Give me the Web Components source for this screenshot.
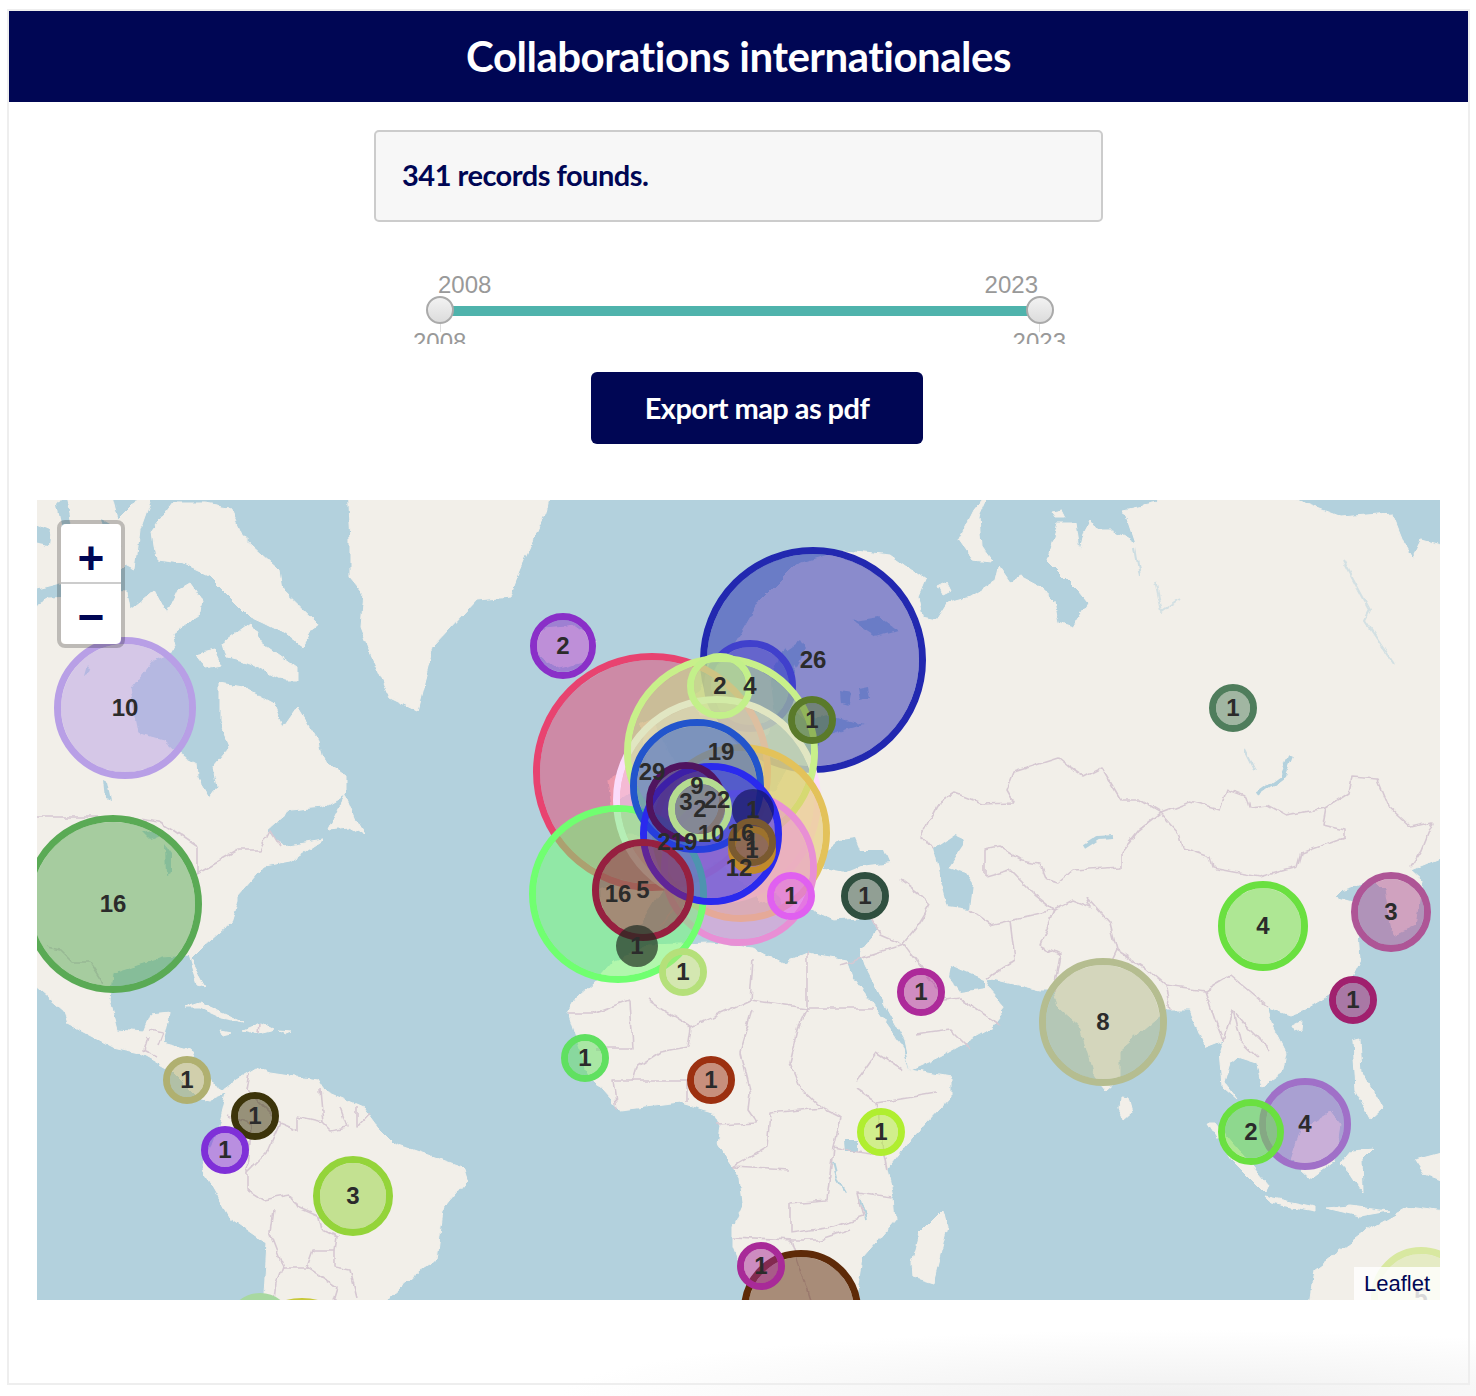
<!DOCTYPE html>
<html lang="fr"><head><meta charset="utf-8"><title>Collaborations internationales</title>
<style>
html,body{margin:0;padding:0;background:#fff}
body{font-family:"Lato","Liberation Sans",sans-serif;height:1396px;overflow:hidden;display:flow-root;background:radial-gradient(ellipse 620px 66px at 1180px 1396px,#f0f0f0,rgba(255,255,255,0))}
</style></head><body>
<x-card heading="Collaborations internationales">
  <x-info>341 records founds.</x-info>
  <x-range from="2008" to="2023"></x-range>
  <x-button>Export map as pdf</x-button>
  <x-map>
    <x-pin x="813" y="660" r="113" c="#2228b0" n="26"></x-pin>
    <x-pin x="750" y="686" r="46" c="#4040cc" n="4"></x-pin>
    <x-pin x="652" y="772" r="119" c="#e84370" n="29"></x-pin>
    <x-pin x="717" y="800" r="104" c="#fbdcfb" n="22"></x-pin>
    <x-pin x="721" y="752" r="97" c="#c8f08a" n="19"></x-pin>
    <x-pin x="741" y="833" r="89" c="#e3c25a" n="16"></x-pin>
    <x-pin x="739" y="868" r="78" c="#e88fd5" n="12"></x-pin>
    <x-pin x="618" y="894" r="89" c="#70ff70" n="16"></x-pin>
    <x-pin x="697" y="786" r="67" c="#2255cc" n="9"></x-pin>
    <x-pin x="711" y="834" r="71" c="#2a2aee" n="10"></x-pin>
    <x-pin x="686" y="802" r="40" c="#50145f" n="3"></x-pin>
    <x-pin x="700" y="809" r="32" c="#b5dc90" n="2"></x-pin>
    <x-pin x="753" y="810" r="21" c="#14145a" n="1" w="0"></x-pin>
    <x-pin x="752" y="850" r="24" c="#c08a2a" n="1"></x-pin>
    <x-pin x="752" y="842" r="24" c="#7a5a30" n="1"></x-pin>
    <x-pin x="643" y="890" r="51" c="#962040" n="5"></x-pin>
    <x-pin x="637" y="946" r="21" c="#1f2a1f" n="1" w="0"></x-pin>
    <x-pin x="720" y="686" r="33" c="#c3f08a" n="2"></x-pin>
    <x-pin x="812" y="720" r="24" c="#5a7a2a" n="1"></x-pin>
    <x-pin x="664" y="842" r="0" c="#000" n="2"></x-pin>
    <x-pin x="684" y="842" r="0" c="#000" n="19"></x-pin>
    <x-pin x="563" y="646" r="33" c="#8a2fc8" n="2"></x-pin>
    <x-pin x="125" y="708" r="71" c="#b89fe6" n="10"></x-pin>
    <x-pin x="113" y="904" r="89" c="#5aaa55" n="16"></x-pin>
    <x-pin x="1233" y="708" r="24" c="#4f7d5c" n="1"></x-pin>
    <x-pin x="791" y="896" r="24" c="#e060f0" n="1"></x-pin>
    <x-pin x="865" y="896" r="24" c="#2f4f3f" n="1"></x-pin>
    <x-pin x="683" y="972" r="24" c="#b5e07a" n="1"></x-pin>
    <x-pin x="921" y="992" r="24" c="#ad2a9a" n="1"></x-pin>
    <x-pin x="1263" y="926" r="45" c="#6ae040" n="4"></x-pin>
    <x-pin x="1391" y="912" r="40" c="#ae5596" n="3"></x-pin>
    <x-pin x="1353" y="1000" r="24" c="#a0206e" n="1"></x-pin>
    <x-pin x="1103" y="1022" r="64" c="#b5bd90" n="8"></x-pin>
    <x-pin x="1305" y="1124" r="46" c="#a070c8" n="4"></x-pin>
    <x-pin x="1251" y="1132" r="33" c="#6ae040" n="2"></x-pin>
    <x-pin x="881" y="1132" r="24" c="#b0ee30" n="1"></x-pin>
    <x-pin x="711" y="1080" r="24" c="#9c3010" n="1"></x-pin>
    <x-pin x="585" y="1058" r="24" c="#60e060" n="1"></x-pin>
    <x-pin x="187" y="1080" r="24" c="#b0b070" n="1"></x-pin>
    <x-pin x="255" y="1116" r="24" c="#3c340a" n="1"></x-pin>
    <x-pin x="225" y="1150" r="24" c="#7f30d8" n="1"></x-pin>
    <x-pin x="353" y="1196" r="40" c="#94d43a" n="3"></x-pin>
    <x-pin x="801" y="1310" r="60" c="#5e2a08" n="7"></x-pin>
    <x-pin x="761" y="1266" r="24" c="#a82a98" n="1"></x-pin>
    <x-pin x="260" y="1326" r="33" c="#a8d8a0" n="2"></x-pin>
    <x-pin x="302" y="1358" r="60" c="#c8c83a" n="7"></x-pin>
    <x-pin x="1421" y="1297" r="50" c="#d8e8a0" n="5"></x-pin>
  </x-map>
</x-card>

<template id="t-card"><style>
:host{display:flex;flex-direction:column;box-sizing:border-box;margin:9px 6px 0 7px;height:1376px;border:2px solid #eee;color:#000654}
header{height:91px;flex:none;background:#000654;color:#fff;font:700 42px/90px "Lato",sans-serif;text-align:center;letter-spacing:-.5px}
main{display:flex;flex-direction:column;align-items:flex-start;padding:28px 28px 0}
</style><header id="h"></header><main><slot></slot></main></template>

<template id="t-info"><style>
:host{display:flex;align-items:center;box-sizing:border-box;width:729px;height:92px;margin-left:337px;padding:0 26px 4px;background:#f7f7f7;border:2px solid #ccc;border-radius:5px;
font:700 29px "Lato",sans-serif;color:#000654;letter-spacing:-.5px}
</style><slot></slot></template>

<template id="t-range"><style>
:host{display:block;box-sizing:border-box;width:652px;height:72px;margin:50px 0 0 377px;overflow:hidden;font:24px/26px "Liberation Sans",sans-serif;color:#999}
.top{display:flex;justify-content:space-between;height:24px;padding:0 28px 0 24px}
.line{display:flex;align-items:center;height:28px;margin:0 12px}
.h{flex:none;box-sizing:border-box;width:28px;height:28px;border-radius:50%;border:2px solid #aaa;background:linear-gradient(#f2f2f2,#dcdcdc);position:relative}
.bar{flex:1;height:10px;margin:2px -14px 0;background:#4fb3ac}
.ticks{display:flex;justify-content:space-between;height:8px;margin:0 26px}
.ticks i{width:1px;background:#ddd}
.labs{display:flex;justify-content:space-between;margin:-3px 0 0 -1px}
</style>
<div class="top"><span id="a"></span><span id="b"></span></div>
<div class="line"><div class="h"></div><div class="bar"></div><div class="h"></div></div>
<div class="ticks"><i></i><i></i></div>
<div class="labs"><span id="c"></span><span id="d"></span></div></template>

<template id="t-button"><style>
:host{display:flex;align-items:center;justify-content:center;box-sizing:border-box;width:332px;height:72px;margin:28px 0 56px 554px;padding-bottom:2px;background:#000654;color:#fff;border-radius:6px;
font:700 29px "Lato",sans-serif;letter-spacing:-.55px}
</style><slot></slot></template>

<template id="t-zoom"><style>
:host{position:absolute;left:20px;top:20px;z-index:2000;display:block;box-sizing:border-box;width:68px;height:128px;border:4px solid rgba(0,0,0,.22);border-radius:8px;background-clip:padding-box}
.b{display:flex;align-items:center;justify-content:center;box-sizing:border-box;height:60px;background:#fff;color:#000654;font:700 46px/1 "Liberation Sans",sans-serif}
.t{border-radius:5px 5px 0 0;border-bottom:2px solid #ccc;padding-top:9px}
.u{border-radius:0 0 5px 5px;padding-top:6px}
</style><div class="b t">+</div><div class="b u">&#8722;</div></template>

<template id="t-pin"><style>
:host{position:absolute;display:block;width:0;height:0}
.c{position:absolute;box-sizing:border-box;border-radius:50%;border-style:solid;background-clip:padding-box}
.n{position:absolute;left:0;top:0;transform:translate(-50%,-50%);z-index:1000;font:700 24px/1 "Liberation Sans",sans-serif;color:#2b2b2b;white-space:nowrap}
</style><div class="c" id="c"></div><span class="n" id="n"></span></template>

<template id="t-map"><style>
:host{display:block;position:relative;width:1403px;height:800px;overflow:hidden;isolation:isolate;background:#b3d1dd}
svg{position:absolute;inset:0}
.att{position:absolute;right:0;bottom:0;z-index:2000;height:33px;box-sizing:border-box;padding:0 10px;background:rgba(255,255,255,.82);color:#000654;font:22px/33px "Liberation Sans",sans-serif}
.land polygon{fill:#f2efe9;stroke:#f2efe9;stroke-width:1;stroke-linejoin:round}
.w polygon{fill:#b3d1dd}
.r polyline{fill:none;stroke:#b3d1dd;stroke-width:2;stroke-linejoin:round}
.bd polyline{fill:none;stroke:#d6c8d2;stroke-width:1.6;stroke-linejoin:round}
</style>
<svg width="1403" height="800" viewBox="37 500 1403 800">
<defs><filter id="rough" filterUnits="userSpaceOnUse" x="0" y="460" width="1480" height="880" color-interpolation-filters="sRGB">
<feTurbulence type="fractalNoise" baseFrequency=".07" numOctaves="3" seed="4" result="n"/>
<feDisplacementMap in="SourceGraphic" in2="n" scale="7" xChannelSelector="R" yChannelSelector="G"/>
<feGaussianBlur stdDeviation=".55"/>
</filter></defs>
<g filter="url(#rough)">
<g class="land">
<polygon points="25,612 50,598 75,597 90,590 127,592 130,610 143,600 155,590 167,613 178,590 190,583 202,600 200,613 173,633 177,650 153,660 130,690 137,733 163,740 177,753 197,763 198,777 210,797 217,787 213,767 230,747 220,723 220,683 243,687 273,703 283,727 297,707 317,740 320,757 347,777 347,793 323,807 290,810 267,830 283,847 323,840 290,862 263,867 237,897 237,900 230,923 203,947 190,960 205,987 197,985 188,955 163,957 113,973 110,1000 118,1030 143,1032 150,1015 170,1013 163,1043 190,1050 207,1080 223,1090 237,1080 257,1068 270,1073 317,1080 323,1090 363,1107 380,1130 393,1143 463,1167 467,1180 443,1210 437,1260 420,1270 390,1297 380,1312 263,1312 267,1243 230,1217 203,1170 220,1123 227,1093 210,1100 197,1097 170,1070 140,1053 113,1047 67,1023 63,1010 25,977"/>
<polygon points="25,488 110,488 118,520 133,505 145,488 155,488 140,530 135,570 125,565 115,575 100,570 80,580 60,583 25,592"/>
<polygon points="153,530 173,503 203,503 230,507 243,537 280,570 283,590 317,623 303,647 283,633 263,623 250,617 230,597 210,577 180,563 157,560"/>
<polygon points="223,643 250,623 263,643 297,667 297,680 283,680 250,663 227,657"/>
<polygon points="195,655 215,650 222,665 205,668"/>
<polygon points="328,829 345,795 355,820 364,835 350,827"/>
<polygon points="185,1008 200,1003 243,1022 222,1018 200,1008"/>
<polygon points="243,1030 260,1023 275,1030 258,1034"/>
<polygon points="220,1031 231,1033 222,1035"/>
<polygon points="279,1031 290,1032 285,1034"/>
<polygon points="347,488 550,488 545,512 520,570 510,597 477,600 433,647 417,710 390,697 370,653 360,627 363,593 350,577 350,540"/>
<polygon points="530,640 545,628 575,625 596,640 590,660 560,668 538,655"/>
<polygon points="918,597 922,617 937,620 948,603 970,597 996,580 999,567 1010,583 1021,577 1040,587 1054,600 1058,623 1073,628 1088,603 1080,593 1047,560 1058,523 1076,523 1080,550 1084,533 1091,520 1098,530 1113,530 1135,543 1124,510 1157,503 1161,488 1270,488 1304,503 1341,517 1392,513 1404,543 1413,558 1422,540 1452,548 1452,853 1411,870 1422,880 1415,925 1393,935 1385,890 1375,880 1341,890 1334,897 1356,903 1360,960 1349,983 1304,1010 1290,1015 1268,1007 1271,1023 1286,1053 1282,1073 1262,1087 1257,1063 1238,1057 1231,1063 1225,1083 1238,1100 1223,1087 1220,1050 1223,1040 1205,1047 1190,1010 1168,1010 1120,1050 1120,1077 1106,1090 1095,1077 1080,1027 1069,1017 1058,1007 1054,990 1040,990 988,978 986,987 1005,1008 988,1030 940,1057 911,1070 905,1040 887,1008 865,965 860,950 877,930 870,917 833,920 817,913 800,905 790,925 778,895 760,880 745,862 760,860 775,905 760,900 735,875 720,862 695,872 668,880 655,900 640,925 618,930 606,922 600,915 600,890 620,884 650,885 655,875 635,855 620,835 650,838 665,825 690,815 695,790 705,780 715,795 745,800 775,790 790,765 810,770 820,740 845,730 865,725 830,715 805,720 790,705 795,660 785,645 770,680 775,720 750,755 735,740 725,715 700,715 695,695 725,660 760,600 795,565 845,550 890,555 925,580"/>
<polygon points="640,795 672,795 680,775 665,745 652,720 640,725 648,760 632,775"/>
<polygon points="608,780 625,770 632,790 612,805"/>
<polygon points="959,540 974,510 992,488 979,517 981,547 992,562 973,560"/>
<polygon points="938,586 946,582 950,590 942,594"/>
<polygon points="1052,512 1062,510 1066,518 1056,518"/>
<polygon points="577,997 593,983 613,960 630,955 650,945 710,943 753,947 783,963 807,953 847,960 853,977 870,1000 903,1047 910,1070 950,1077 950,1097 913,1137 887,1170 893,1197 895,1220 863,1257 855,1312 753,1312 748,1287 733,1247 733,1227 743,1203 740,1177 717,1143 720,1127 713,1113 680,1103 620,1110 587,1073 568,1013"/>
<polygon points="943,1210 947,1227 933,1283 913,1277 912,1263 920,1233"/>
<polygon points="1121,1097 1128,1098 1132,1113 1124,1120 1120,1110"/>
<polygon points="1207,1123 1216,1123 1268,1185 1264,1193 1231,1160"/>
<polygon points="1264,1196 1315,1207 1315,1211 1270,1203"/>
<polygon points="1290,1160 1300,1130 1330,1112 1340,1125 1335,1160 1310,1178"/>
<polygon points="1341,1163 1352,1150 1374,1148 1362,1160 1363,1192 1352,1175"/>
<polygon points="1352,1042 1360,1040 1362,1071 1382,1108 1370,1119 1355,1090"/>
<polygon points="1326,1208 1350,1206 1389,1211 1360,1216"/>
<polygon points="1415,1160 1452,1150 1452,1185 1425,1175"/>
<polygon points="1292,1026 1302,1021 1301,1030 1294,1032"/>
<polygon points="1314,1270 1371,1227 1407,1207 1452,1213 1452,1312 1308,1312"/>
</g>
<g class="w">
<polygon points="57,505 65,495 72,525 62,528"/>
<polygon points="25,520 50,530 48,545 25,540"/>
<polygon points="100,520 118,530 120,560 108,555"/>
<polygon points="822,855 840,840 855,838 860,850 885,850 890,862 860,866 845,872 825,868"/>
<polygon points="933,850 955,835 966,840 948,867 966,873 973,883 970,910 948,907 940,877"/>
<polygon points="950,965 985,980 985,988 960,992 948,975"/>
<polygon points="786,650 800,640 806,650 796,668"/>
<polygon points="853,622 880,618 897,630 875,636"/>
<polygon points="858,688 868,686 870,698 860,700"/>
<polygon points="840,692 850,694 848,706 841,704"/>
<polygon points="845,1141 858,1141 858,1152 846,1152"/>
<polygon points="143,833 158,829 162,835 150,840"/>
<polygon points="165,845 172,855 172,872 166,875"/>
<polygon points="87,665 92,672 84,676"/>
<polygon points="104,780 108,782 112,800 106,798"/>
</g>
<g class="r">
<polyline points="1290,757 1282,777 1257,795" style="stroke-width:4"/>
<polyline points="1084,847 1098,838 1113,837" style="stroke-width:4"/>
<polyline points="833,1160 838,1180 845,1192"/>
<polyline points="860,1198 866,1220"/>
<polyline points="1343,560 1370,610 1365,620 1395,665" style="opacity:.5"/>
<polyline points="1155,580 1162,612 1180,600" style="opacity:.5"/>
<polyline points="1245,750 1255,770" style="opacity:.6"/>
<polyline points="1135,547 1140,575" style="opacity:.6"/>
</g>
<g class="bd">
<polyline points="929,820 937,805 955,793 981,803 1014,802 1007,790 1014,772 1058,758 1069,767 1084,777 1102,768 1121,800 1139,800 1161,813"/>
<polyline points="1161,813 1190,802 1220,810 1227,790 1246,797 1249,807 1268,805 1286,815 1326,808 1323,825 1345,830 1345,837 1301,853 1297,867 1260,877 1212,868 1209,857 1183,848 1179,833 1161,813"/>
<polyline points="1326,808 1349,793 1352,778 1378,780 1389,807 1411,827 1433,822 1422,850 1411,867"/>
<polyline points="1161,813 1139,830 1121,853 1121,867 1073,870 1058,883 1047,880 1040,863 1021,860 999,847 985,850 985,877"/>
<polyline points="985,877 1010,870 1035,895 1054,910 1073,900 1091,907 1087,897 1110,923 1117,950 1110,965"/>
<polyline points="929,820 922,835 933,850"/>
<polyline points="900,880 920,895 930,905 915,930 903,945 880,935 870,917"/>
<polyline points="1010,920 1054,910 1040,945 1060,955 1054,990"/>
<polyline points="970,910 990,925 1010,920 1015,960 988,978"/>
<polyline points="1117,950 1145,968 1165,985 1170,1010"/>
<polyline points="1165,985 1205,990 1230,975 1268,1007"/>
<polyline points="1205,990 1215,1020 1223,1040 1233,1010 1250,1030 1270,1050"/>
<polyline points="1233,1010 1240,1040 1258,1057"/>
<polyline points="905,945 945,1000 960,998 1000,1025"/>
<polyline points="915,1035 950,1030 970,1050"/>
<polyline points="568,1013 593,1013 630,1000 633,1048 597,1048"/>
<polyline points="690,1027 647,1000"/>
<polyline points="690,1027 750,1000 807,1008 873,1008"/>
<polyline points="690,1027 687,1047 660,1052 637,1067 633,1080 613,1080 617,1110"/>
<polyline points="633,1080 687,1080 687,1103"/>
<polyline points="753,1010 740,1053 750,1093 748,1110 757,1123 717,1125"/>
<polyline points="800,1023 790,1063 800,1087 822,1108 770,1113 767,1147 733,1167 790,1170"/>
<polyline points="800,1023 807,1008 807,950"/>
<polyline points="750,1000 753,960"/>
<polyline points="822,1108 840,1117 833,1147 827,1200 790,1203 790,1233 833,1227 863,1217 857,1193 893,1198"/>
<polyline points="858,1080 877,1053 903,1070"/>
<polyline points="857,1090 877,1103 937,1093"/>
<polyline points="877,1103 883,1150 887,1170"/>
<polyline points="833,1147 858,1152 880,1155"/>
<polyline points="733,1237 793,1240 820,1240 850,1230"/>
<polyline points="790,1240 810,1300"/>
<polyline points="250,1073 247,1090 280,1123 297,1130 297,1117 323,1123 320,1090"/>
<polyline points="323,1123 330,1130 347,1127 340,1107"/>
<polyline points="357,1107 357,1127 370,1113"/>
<polyline points="280,1123 267,1153 247,1173 247,1190 263,1200 290,1195 297,1207 320,1217 323,1230 337,1237 335,1250 313,1250 307,1267 283,1267 277,1283 275,1300"/>
<polyline points="273,1210 270,1233 283,1267"/>
<polyline points="335,1250 335,1267 350,1270 357,1297"/>
<polyline points="307,1267 337,1287 333,1300"/>
<polyline points="227,1115 250,1125 247,1173"/>
<polyline points="25,817 123,817 160,822 197,847 197,873 237,850 260,850 270,830 280,847"/>
<polyline points="47,947 60,950 73,963 90,963 103,983"/>
<polyline points="147,1037 143,1050 157,1057"/>
<polyline points="150,1030 163,1033 158,1046"/>
<polyline points="259,1023 258,1034"/>
<polyline points="840,965 905,945"/>
<polyline points="660,925 690,890"/>
</g>
</g>
</svg>
<slot></slot>
<x-zoom></x-zoom>
<div class="att">Leaflet</div></template>

<script>
function shadow(el,id){const r=el.attachShadow({mode:'open'});r.appendChild(document.getElementById(id).content.cloneNode(true));return r;}
customElements.define('x-card',class extends HTMLElement{connectedCallback(){if(this.shadowRoot)return;const r=shadow(this,'t-card');r.getElementById('h').textContent=this.getAttribute('heading');}});
customElements.define('x-info',class extends HTMLElement{connectedCallback(){if(!this.shadowRoot)shadow(this,'t-info');}});
customElements.define('x-button',class extends HTMLElement{connectedCallback(){if(!this.shadowRoot)shadow(this,'t-button');}});
customElements.define('x-range',class extends HTMLElement{connectedCallback(){if(this.shadowRoot)return;const r=shadow(this,'t-range'),f=this.getAttribute('from'),t=this.getAttribute('to');r.getElementById('a').textContent=f;r.getElementById('c').textContent=f;r.getElementById('b').textContent=t;r.getElementById('d').textContent=t;}});
customElements.define('x-zoom',class extends HTMLElement{connectedCallback(){if(!this.shadowRoot)shadow(this,'t-zoom');}});
customElements.define('x-map',class extends HTMLElement{connectedCallback(){if(!this.shadowRoot)shadow(this,'t-map');}});
let order=0;
customElements.define('x-pin',class extends HTMLElement{connectedCallback(){
 if(this.shadowRoot)return;const r=shadow(this,'t-pin');
 const x=+this.getAttribute('x')-37,y=+this.getAttribute('y')-500,R=+this.getAttribute('r'),col=this.getAttribute('c'),ringless=this.hasAttribute('w'),w=ringless?+this.getAttribute('w'):7,mix=ringless?68:50;
 this.style.left=x+'px';this.style.top=y+'px';
 const c=r.getElementById('c');
 if(R>0){c.style.cssText=`left:${-R}px;top:${-R}px;width:${2*R}px;height:${2*R}px;border-width:${w}px;border-color:${col};background-color:color-mix(in srgb,${col} ${mix}%,transparent);z-index:${++order}`;}
 else c.remove();
 r.getElementById('n').textContent=this.getAttribute('n');
}});
</script>
</body></html>
